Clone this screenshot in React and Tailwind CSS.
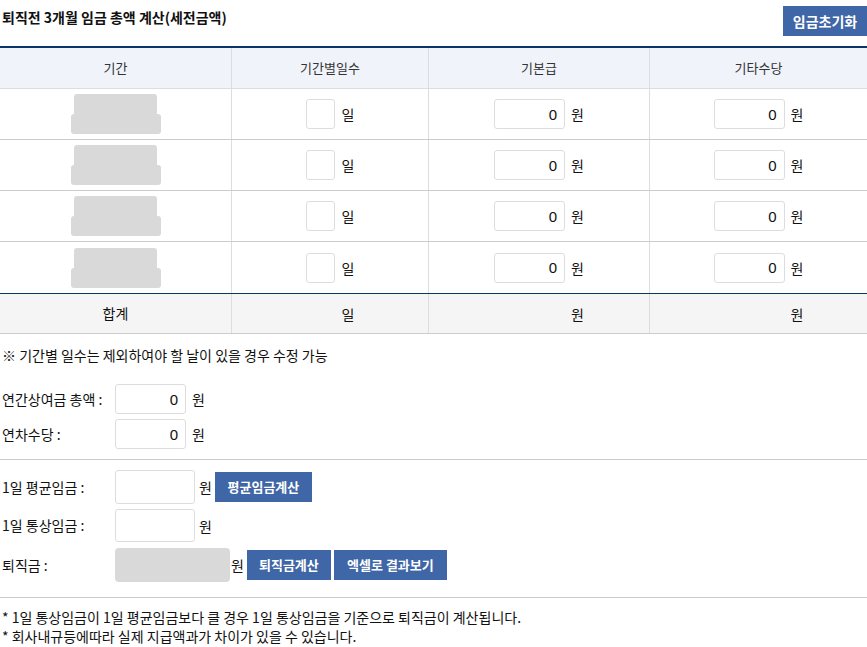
const ROWS = [0, 1, 2, 3]

const font = "font-['Noto_Sans_CJK_KR',sans-serif]"

function NumInput({ w = 'w-[71px]', h = 'h-[30px]', value = '' }) {
  return (
    <input
      readOnly
      value={value}
      className={`${w} ${h} rounded-[3px] border border-[#dddddd] bg-white pr-[7px] text-right font-['Liberation_Sans',sans-serif] text-[15px] text-[#111] outline-none`}
    />
  )
}

function Unit({ children, className = '' }) {
  return <span className={`text-[14px] leading-none text-[#111] ${className}`}>{children}</span>
}

function Btn({ children, className = '' }) {
  return (
    <button
      type="button"
      className={`h-[30px] bg-[#3f66a7] px-[9px] text-[13px] font-bold text-white ${className}`}
    >
      {children}
    </button>
  )
}

export default function App() {
  return (
    <div className={`w-[867px] bg-white text-[#111] ${font}`}>
      <div className="flex h-[46px] items-start justify-between">
        <h2 className="pl-[2px] pt-[6px] text-[14px] leading-[22px] font-bold text-[#111]">
          퇴직전 3개월 임금 총액 계산(세전금액)
        </h2>
        <button
          type="button"
          className="mt-[6px] h-[30px] w-[84px] bg-[#3f66a7] text-[14px] font-bold text-white"
        >
          임금초기화
        </button>
      </div>

      <div className="border-t-2 border-[#0b3566]">
        <div className="grid h-[41px] grid-cols-[231px_197px_221px_1fr] border-b border-[#dddddd] bg-[#f0f4fa] text-[13px] text-[#333]">
          <div className="flex items-center justify-center">기간</div>
          <div className="flex items-center justify-center border-l border-[#dddddd]">기간별일수</div>
          <div className="flex items-center justify-center border-l border-[#dddddd]">기본급</div>
          <div className="flex items-center justify-center border-l border-[#dddddd]">기타수당</div>
        </div>

        {ROWS.map((r, i) => (
          <div
            key={r}
            className={`grid h-[51px] grid-cols-[231px_197px_221px_1fr] ${
              i < ROWS.length - 1 ? 'border-b border-[#cccccc]' : ''
            }`}
          >
            <div className="flex flex-col items-center justify-center">
              <div className="h-[20px] w-[83px] rounded-t-[3px] bg-[#d9d9d9]" />
              <div className="h-[20px] w-[90px] rounded-[3px] bg-[#d9d9d9]" />
            </div>
            <div className="flex items-center justify-center gap-[7px] border-l border-[#dddddd]">
              <NumInput w="w-[29px]" />
              <Unit>일</Unit>
            </div>
            <div className="flex items-center justify-center gap-[6px] border-l border-[#dddddd]">
              <NumInput value="0" />
              <Unit>원</Unit>
            </div>
            <div className="flex items-center justify-center gap-[6px] border-l border-[#dddddd]">
              <NumInput value="0" />
              <Unit>원</Unit>
            </div>
          </div>
        ))}

        <div className="grid h-[41px] grid-cols-[231px_197px_221px_1fr] border-t border-b border-t-[#0b3566] border-b-[#cccccc] bg-[#f5f5f5] text-[14px]">
          <div className="flex items-center justify-center">합계</div>
          <div className="flex items-center justify-center gap-[7px] border-l border-[#dddddd]">
            <span className="w-[29px]" />
            <Unit>일</Unit>
          </div>
          <div className="flex items-center justify-center gap-[6px] border-l border-[#dddddd]">
            <span className="w-[71px]" />
            <Unit>원</Unit>
          </div>
          <div className="flex items-center justify-center gap-[6px] border-l border-[#dddddd]">
            <span className="w-[71px]" />
            <Unit>원</Unit>
          </div>
        </div>
      </div>

      <p className="mt-[11px] pl-[2px] text-[14px] leading-[20px]">
        ※ 기간별 일수는 제외하여야 할 날이 있을 경우 수정 가능
      </p>

      <div className="mt-[19px] flex flex-col gap-[5px]">
        <div className="flex items-center">
          <span className="w-[115px] pl-[2px] text-[14px]">연간상여금 총액 :</span>
          <NumInput value="0" />
          <Unit className="ml-[6px]">원</Unit>
        </div>
        <div className="flex items-center">
          <span className="w-[115px] pl-[2px] text-[14px]">연차수당 :</span>
          <NumInput value="0" />
          <Unit className="ml-[6px]">원</Unit>
        </div>
      </div>

      <div className="mt-[10px] border-t border-[#cccccc]" />

      <div className="mt-[10px] flex flex-col">
        <div className="flex items-center">
          <span className="w-[115px] pl-[2px] text-[14px]">1일 평균임금 :</span>
          <NumInput w="w-[80px]" h="h-[34px]" />
          <Unit className="ml-[4px]">원</Unit>
          <Btn className="ml-[3px] w-[97px]">평균임금계산</Btn>
        </div>
        <div className="mt-[5px] flex items-center">
          <span className="w-[115px] pl-[2px] text-[14px]">1일 통상임금 :</span>
          <NumInput w="w-[80px]" h="h-[33px]" />
          <Unit className="ml-[4px]">원</Unit>
        </div>
        <div className="mt-[6px] flex items-center">
          <span className="w-[115px] pl-[2px] text-[14px]">퇴직금 :</span>
          <div className="h-[34px] w-[115px] rounded-[4px] bg-[#d9d9d9]" />
          <Unit className="ml-[1px]">원</Unit>
          <Btn className="ml-[3px] w-[84px]">퇴직금계산</Btn>
          <Btn className="ml-[3px] w-[113px]">엑셀로 결과보기</Btn>
        </div>
      </div>

      <div className="mt-[15px] border-t border-[#cccccc]" />

      <div className="mt-[10px] pl-[2px] text-[14px] leading-[19px]">
        <p>* 1일 통상임금이 1일 평균임금보다 클 경우 1일 통상임금을 기준으로 퇴직금이 계산됩니다.</p>
        <p>* 회사내규등에따라 실제 지급액과가 차이가 있을 수 있습니다.</p>
      </div>
    </div>
  )
}
